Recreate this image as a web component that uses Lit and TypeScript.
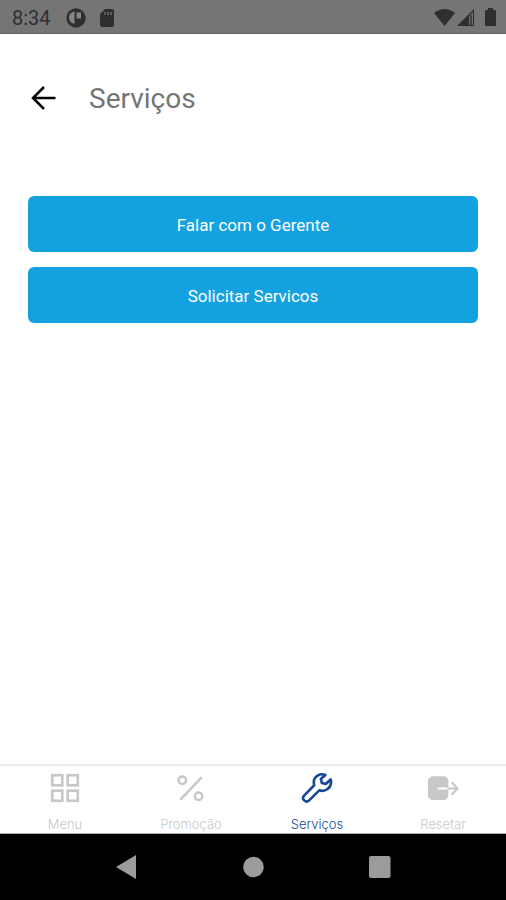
import { LitElement, html, css, svg } from "lit";
import { customElement, state } from "lit/decorators.js";
import { classMap } from "lit/directives/class-map.js";

const tabs = [
  {
    id: "menu",
    label: "Menu",
    icon: svg`<g fill="none" stroke="currentColor" stroke-width="2.8">
      <rect x="3.3" y="3.3" width="10.4" height="10.4"/><rect x="19.3" y="3.3" width="10.4" height="10.4"/>
      <rect x="3.3" y="19.3" width="10.4" height="10.4"/><rect x="19.3" y="19.3" width="10.4" height="10.4"/></g>`,
  },
  {
    id: "promocao",
    label: "Promoção",
    icon: svg`<g fill="none" stroke="currentColor" stroke-width="2.6">
      <circle cx="7.500" cy="8.500" r="3.900"/><circle cx="24.3" cy="25" r="3.900"/><path d="M5.5 28.5 27.5 5.5"/></g>`,
  },
  {
    id: "servicos",
    label: "Serviços",
    icon: svg`<path fill="none" stroke="currentColor" stroke-width="2.700" stroke-linejoin="round" stroke-linecap="round"
      d="M25.200 3.100C19.600 .8 13.300 4.600 13.200 10.300c0 1.400.1 2.300.4 3.400L3.200 24.300c-3.200 3.500 1.800 8.200 5.200 5L18.800 18.900c6.400 2 12.600-2.400 12.200-9.300-.1-.9-.2-1.300-.5-1.900l-5 4.600-4-.9-1-4.100z"/>`,
  },
  {
    id: "resetar",
    label: "Resetar",
    icon: svg`<rect x="1" y="4.500" width="21" height="24.500" rx="5" fill="currentColor"/>
      <path fill="none" stroke="#fff" stroke-width="2" d="M11 17h11"/>
      <path fill="none" stroke="currentColor" stroke-width="2.200" stroke-linecap="round" stroke-linejoin="round" d="M22 17h9M26 11l5.500 6-5.500 6"/>`,
  },
];

@customElement("status-bar")
class StatusBar extends LitElement {
  static styles = css`
    :host {
      display: flex;
      align-items: center;
      height: 34px;
      padding: 2px 8px 0 12px;
      box-sizing: border-box;
      background: #757575;
      border-bottom: 1px solid #636363;
      color: #2f2f2f;
      font-size: 20px;
    }
    .time { margin-right: 15px; }
    .disc { margin-right: 13px; }
    .signal { margin-left: auto; }
    svg { display: block; }
  `;
  render() {
    return html`
      <span class="time">8:34</span>
      <svg class="disc" width="20" height="20" viewBox="0 0 20 20" aria-hidden="true">
        <circle cx="10" cy="10" r="9.700" fill="currentColor"/>
        <path d="M8.500 3.500v12.500C5 15 3 12.500 3 9.500S5.500 4 8.500 3.500zM10.500 4.500h4.500v6h-4.500z" fill="#858585"/>
      </svg>
      <svg width="16" height="20" viewBox="0 0 16 20" aria-hidden="true">
        <path d="M6 1h7a2 2 0 0 1 2 2v14a2 2 0 0 1-2 2H3a2 2 0 0 1-2-2V6z" fill="currentColor"/>
        <path d="M6 4v3M9 4v3M12 4v3" stroke="#6c6c6c" stroke-width="1.500"/>
      </svg>
      <svg class="signal" width="64" height="20" viewBox="0 0 64 20" aria-hidden="true">
        <path d="M0 5Q10.500-3 21 5L10.500 18z" fill="currentColor"/>
        <path d="M40 1v17H23z" fill="currentColor"/>
        <path d="M35 8l4-4v13h-4z" fill="#6f6f6f"/><path d="M37 7v10" stroke="currentColor" stroke-width="1.500"/>
        <path d="M54 2V0h5v2h2a1 1 0 0 1 1 1v14a1 1 0 0 1-1 1h-9a1 1 0 0 1-1-1V3a1 1 0 0 1 1-1z" fill="currentColor"/>
      </svg>
    `;
  }
}

@customElement("tab-bar")
class TabBar extends LitElement {
  @state() active = "servicos";
  static styles = css`
    :host { display: block; }
    nav {
      display: grid;
      grid-template-columns: repeat(4, 1fr);
      height: 70px;
      box-sizing: border-box;
      padding-left: 2px;
      border-top: 2px solid #ebebeb;
      border-bottom: 1px solid #aaa;
      background: #fff;
    }
    .tab {
      display: flex;
      flex-direction: column;
      align-items: center;
      gap: 12px;
      padding: 6px 0 0;
      border: 0;
      background: none;
      color: #c8c8c8;
      font: 300 13px/16px Inter, Roboto, sans-serif;
    }
    .tab.active { color: #17479b; }
    svg { display: block; flex: none; }
  `;
  render() {
    return html`<nav>
      ${tabs.map(
        (t) => html`<button
          class=${classMap({ tab: true, active: t.id === this.active })}
          @click=${() => (this.active = t.id)}
        >
          <svg width="32" height="32" viewBox="0 0 33 33" aria-hidden="true">${t.icon}</svg>
          <span>${t.label}</span>
        </button>`
      )}
    </nav>`;
  }
}

@customElement("system-nav")
class SystemNav extends LitElement {
  static styles = css`
    :host {
      display: flex;
      justify-content: center;
      gap: 102px;
      height: 66px;
      align-items: center;
      background: #000;
    }
    button { padding: 0; border: 0; background: none; color: #9b9b9b; }
    svg { display: block; }
  `;
  render() {
    return html`
      <button aria-label="Voltar"><svg width="24" height="24" viewBox="0 0 24 24"><path d="M1 12 21 0v24z" fill="currentColor"/></svg></button>
      <button aria-label="Início"><svg width="24" height="24" viewBox="0 0 24 24"><circle cx="12.500" cy="12" r="10.300" fill="currentColor"/></svg></button>
      <button aria-label="Recentes"><svg width="24" height="24" viewBox="0 0 24 24"><rect x="2" y="1" width="21.500" height="22" rx="2" fill="currentColor"/></svg></button>
    `;
  }
}

@customElement("app-root")
class AppRoot extends LitElement {
  static styles = css`
    :host {
      display: flex;
      flex-direction: column;
      min-height: 100vh;
      background: #fff;
      font-family: Roboto, sans-serif;
    }
    header {
      display: flex;
      align-items: center;
      gap: 32px;
      padding: 48px 29px 0;
    }
    .back { padding: 0; border: 0; background: none; color: #000; }
    .back svg { display: block; }
    h1 { margin: 0; font-size: 28px; line-height: 34px; font-weight: 400; color: #757575; }
    main {
      flex: 1;
      display: flex;
      flex-direction: column;
      gap: 15px;
      padding: 80px 28px 24px;
    }
    .action {
      height: 56px;
      border: 0;
      border-radius: 6px;
      background: #14a1df;
      color: #fff;
      font: 400 17px/20px Roboto, sans-serif;
      padding: 2px 0 0;
    }
  `;
  render() {
    return html`
      <status-bar></status-bar>
      <header>
        <button class="back" aria-label="Voltar">
          <svg width="28" height="28" viewBox="0 0 28 28"><path d="M26.500 13H4M15 2 4 13l11 11" fill="none" stroke="currentColor" stroke-width="2.500"/></svg>
        </button>
        <h1>Serviços</h1>
      </header>
      <main>
        <button class="action">Falar com o Gerente</button>
        <button class="action">Solicitar Servicos</button>
      </main>
      <tab-bar></tab-bar>
      <system-nav></system-nav>
    `;
  }
}
